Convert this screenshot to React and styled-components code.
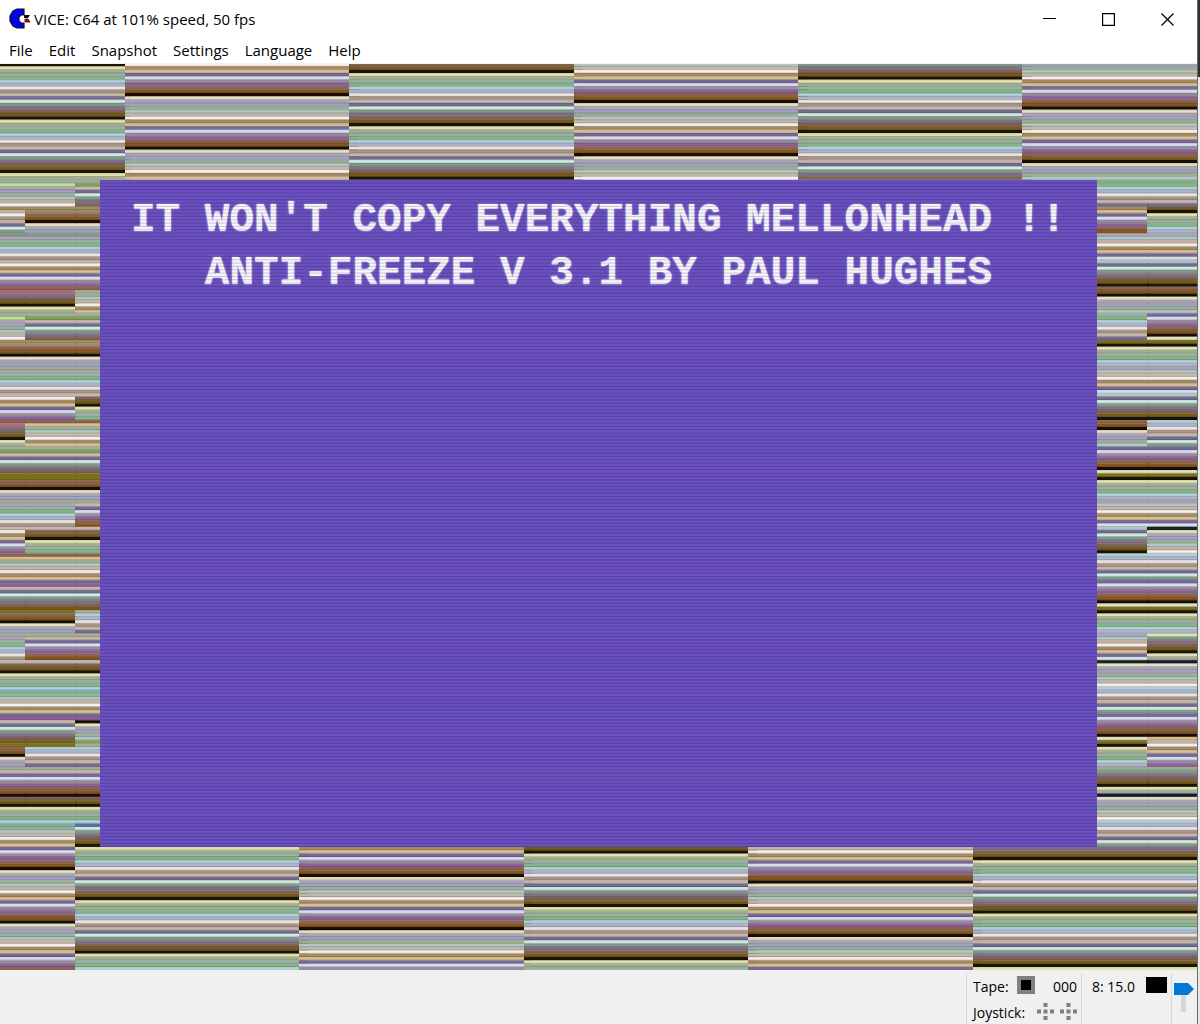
import React from 'react';
import styled, { createGlobalStyle } from 'styled-components';

const GlobalStyle = createGlobalStyle`
  * {
    box-sizing: border-box;
  }

  body {
    margin: 0;
    background: #f0f0f0;
    color: #000;
    font-family: 'Open Sans', 'Noto Sans', sans-serif;
    font-size: 15px;
  }
`;

// one letter per raster line colour
const COLORS = {
  K: '#1c1400',
  y: '#dfe2b0',
  g: '#a5ae90',
  t: '#96b4a0',
  G: '#86b585',
  b: '#b0cfdb',
  l: '#acb4c8',
  w: '#ece4e4',
  n: '#a69583',
  p: '#c8b6ab',
  v: '#736b92',
  m: '#cfe9e0',
  e: '#7f9a88',
  u: '#836f88',
  r: '#7e6355',
  o: '#775a16',
  k: '#1c0d00',
  Y: '#e0e0c4',
  a: '#aea4b8',
  c: '#a0a2c2',
  h: '#9fb092',
  i: '#adc8c6',
  q: '#c8b5a4',
  W: '#f4eeec',
  s: '#a48c62',
  S: '#d8bd90',
  V: '#77689c',
  M: '#d6dcec',
  z: '#9a8aa0',
  P: '#8d609a',
  R: '#8d6450',
  O: '#86561a',
  x: '#84a052',
  L: '#c4e090',
  B: '#4f74ac',
  T: '#78b3a5',
  N: '#17163c',
  E: '#16281c',
  D: '#7b7218',
  X: '#b46c7c',
};

const GREENS = 'KygtGblwnpvmeuro';
const VIOLETS = 'kYachiqWsSVMzPRO';

// repeats a palette so that its black line lands on the given row
const cycle = (palette, black, rows) =>
  Array.from({ length: rows }, (_, i) => palette[(i - black + 160) % 16]).join('');

const TOP = [
  { span: 40, lines: cycle(GREENS, 0, 35) },
  { span: 72, lines: cycle(VIOLETS, 9, 35) },
  { span: 72, lines: cycle(GREENS, 2, 35) },
  { span: 72, lines: cycle(VIOLETS, 11, 35) },
  { span: 72, lines: cycle(GREENS, 4, 35) },
  { span: 56, lines: cycle(VIOLETS, 13, 35) },
];

const BOTTOM = [
  { span: 24, lines: cycle(VIOLETS, 6, 37) },
  { span: 72, lines: cycle(GREENS, 15, 37) },
  { span: 72, lines: cycle(VIOLETS, 8, 37) },
  { span: 72, lines: cycle(GREENS, 1, 37) },
  { span: 72, lines: cycle(VIOLETS, 10, 37) },
  { span: 72, lines: cycle(GREENS, 3, 37) },
];

const LEFT = [
  {
    span: 8,
    lines: [
      'tLachiqWsqWnpvmeeatG',
      'blwnpWsSVMzPRXuroKyg',
      'tLachiqWssROkYachatG',
      'blwnpWsSVMzPRXuroKyg',
      'txpvmeurDDROkYachatG',
      'blwnpWsSVMzPRShiqWsS',
      'VPpvmeuroDROkYachatG',
      'blwnproKygtGbThiqWsS',
      'VPpvmeuroDROkYachpVM',
      'zPROkroKygtGbThiqWsS',
    ].join(''),
  },
  {
    span: 16,
    lines: [
      'tLachiqWssROkYaceatG',
      'blwnpWsSVMzPRXuroKyg',
      'txpvmeurssROkYachatG',
      'blwnpWsSVMzPRShiqWsS',
      'txpvmeurDDROkYachatG',
      'blwnproKygtGRShiqWsS',
      'VPpvmeuroDROkYachpVM',
      'zPROproKygtGbThiqWsS',
      'VPpvmeuroDblwnpvhpVM',
      'zPROkroKygtGbThiqWsS',
    ].join(''),
  },
  {
    span: 8,
    lines: [
      'txpvmeurssROkYaceatG',
      'blwnpWsSVMzPRghiqWsS',
      'txpvmeurssROkYachatG',
      'blwnproKygtGRShiqWsS',
      'txpvmeurDDROkYachpVM',
      'zPROproKygtGRShiqWsS',
      'VPpvmeurogblwnpvhpVM',
      'zPROproKygtGbThiqWsS',
      'VPkYachixgblwnpvhpVM',
      'zPROkroKygtGbBmeuroK',
    ].join(''),
  },
];

const RIGHT = [
  {
    span: 16,
    lines: [
      'GGblwnpvsSVMzPROaiqW',
      'sSVMivmeuroKROkYachi',
      'tGblwnpvDKygtGblaiqW',
      'sSVMivmeuroKROkYachi',
      'VMzPROkYDKygtGblaiqW',
      'sSVMivmeuroKblwnpvme',
      'VMzPROkYDKygtGblaiqW',
      'sSVMEYachiqWblwnpvme',
      'VMzPROkYDKygtGblheur',
      'oKygNYachiqWblwnpvme',
    ].join(''),
  },
  {
    span: 16,
    lines: [
      'GGblwnpvoKygtGblaiqW',
      'sSVMivmeuroKROkYachi',
      'VMzPROkYDKygtGblaiqW',
      'sSVMivmeuroKblwnpvme',
      'VMzPROkYDKygtGblaiqW',
      'sSVMEYachiqWblwnpvme',
      'VMzPROkYDKygtGblyeur',
      'oKygNYachiqWblwnpvme',
      'VMzPROkSqWsSVMzPheur',
      'oKygNYachiqWblwnpvme',
    ].join(''),
  },
];

const Desktop = styled.div`
  display: flex;
  min-height: 100vh;
`;

const Window = styled.main`
  flex: 1;
  min-width: 0;
  display: flex;
  flex-direction: column;
  border-right: 1px solid #6c6c6c;
`;

const Backdrop = styled.div`
  width: 2px;
  background: linear-gradient(#2f2f33 0 77px, #e8e8e8 77px);
`;

const Chrome = styled.header`
  position: relative;
  z-index: 1;
  height: 63px;
  background: #fff;
  box-shadow: 0 1px 0 #f0f0f0;
`;

const TitleBar = styled.div`
  display: flex;
  align-items: center;
  height: 38px;
  padding-left: 9px;
`;

const Title = styled.h1`
  flex: 1;
  margin: 0 0 0 3px;
  font-size: 15px;
  font-weight: 400;
  line-height: 20px;
`;

const CaptionButton = styled.button`
  display: flex;
  align-items: center;
  justify-content: center;
  width: 59px;
  height: 36px;
  padding: 0;
  border: 0;
  background: none;
`;

const MenuBar = styled.nav`
  display: flex;
  gap: 16px;
  padding-left: 9px;
`;

const MenuButton = styled.button`
  padding: 0;
  border: 0;
  background: none;
  color: inherit;
  font: inherit;
  line-height: 25px;
`;

const Display = styled.section`
  position: relative;
  flex: 1;
  display: flex;
  flex-direction: column;
  overflow: hidden;
`;

const Band = styled.div`
  flex: ${p => p.$rows} 1 0;
  min-height: 0;
  display: flex;
`;

const Strip = styled.svg`
  flex: ${p => p.$span} 1 0;
  min-width: 0;
  width: 0;
  height: 100%;
  display: block;
  overflow: visible;
`;

const Paper = styled.div`
  flex: 320 1 0;
  min-width: 0;
  padding-top: 14px;
  background: #6a50c0;
  color: #f6f4fc;
  text-align: center;
`;

const PaperLine = styled.p`
  margin: 0;
  font-family: 'Liberation Mono', monospace;
  font-size: 41px;
  font-weight: 700;
  line-height: 53px;
  white-space: pre;
  text-shadow: 0 0 2px #d8d0f4;
`;

const Scanlines = styled.svg`
  position: absolute;
  inset: 0;
  width: 100%;
  height: 100%;
  pointer-events: none;
`;

const StatusBar = styled.footer`
  display: flex;
  justify-content: flex-end;
  height: 54px;
  background: #f0f0f0;
  font-size: 14px;
  line-height: 26px;
`;

const Panel = styled.div`
  width: ${p => p.$width}px;
  margin-top: 4px;
  padding-left: ${p => p.$inset}px;
  border-left: 1px solid #d7d7d7;
`;

const PanelRow = styled.div`
  display: flex;
  align-items: center;
  height: 26px;
`;

const TapeMotor = styled.span`
  width: 18px;
  height: 18px;
  margin: 0 0 4px 8px;
  border: 4px solid #808080;
  background: #000;
`;

const Counter = styled.span`
  margin: 0 4px 0 auto;
`;

const DriveLed = styled.span`
  width: 21px;
  height: 16px;
  margin: 0 4px 4px auto;
  background: #000;
`;

const Ports = styled.span`
  display: flex;
  gap: 6px;
  margin: 0 4px 4px auto;
`;

const Volume = styled.input`
  appearance: none;
  display: block;
  width: 20px;
  height: 34px;
  margin: 9px 0 0;
  background: linear-gradient(#d6d6d6, #d6d6d6) 7px 5px / 5px 24px no-repeat;
  writing-mode: vertical-lr;
  direction: rtl;

  &::-webkit-slider-thumb {
    appearance: none;
    width: 20px;
    height: 12px;
    border: 0;
    background: #0078d7;
    clip-path: polygon(0 0, 14px 0, 100% 50%, 14px 100%, 0 100%);
  }
`;

const RasterStrip = ({ span, lines }) => (
  <Strip
    $span={span}
    viewBox={`0 0 1 ${lines.length}`}
    preserveAspectRatio="none"
    aria-hidden="true"
  >
    {lines.split('').map((c, i) => (
      <rect key={i} y={i} width="1.04" height="1" fill={COLORS[c]} />
    ))}
  </Strip>
);

const Border = ({ strips }) => strips.map((s, i) => <RasterStrip key={i} {...s} />);

const CommodoreLogo = () => (
  <svg width="22" height="22" viewBox="0 0 22 22" aria-hidden="true">
    <path
      d="M8 1h7v6h-3l-2 2v4l2 2h3v5H8l-4-2-3-5V8l3-5z"
      fill="#0000f4"
      stroke="#111"
      strokeWidth="1.2"
    />
    <path d="M15 7h6l-2 3h-4z" fill="#0a0a30" />
    <path d="M16 11h3l2 3h-5z" fill="#e00010" stroke="#200" strokeWidth="0.8" />
  </svg>
);

const JoystickIcon = () => (
  <svg width="17" height="17" viewBox="0 0 17 17" fill="#808080" aria-hidden="true">
    <path d="M6.5 0h4v4h-4zM0 6.5h4v4H0zM6.5 6.5h4v4h-4zM13 6.5h4v4h-4zM6.5 13h4v4h-4z" />
  </svg>
);

const MENUS = ['File', 'Edit', 'Snapshot', 'Settings', 'Language', 'Help'];

export default function App() {
  return (
    <Desktop>
      <GlobalStyle />
      <Window>
        <Chrome>
          <TitleBar>
            <CommodoreLogo />
            <Title>VICE: C64 at 101% speed, 50 fps</Title>
            <CaptionButton aria-label="Minimize">
              <svg width="13" height="13">
                <path d="M0 5.5h13" stroke="#000" />
              </svg>
            </CaptionButton>
            <CaptionButton aria-label="Maximize">
              <svg width="13" height="13">
                <path d="M.5 .5h12v12H.5z" fill="none" stroke="#000" strokeWidth="1.4" />
              </svg>
            </CaptionButton>
            <CaptionButton aria-label="Close">
              <svg width="13" height="13">
                <path d="M.5 .5l12 12M12.5 .5l-12 12" stroke="#000" strokeWidth="1.3" />
              </svg>
            </CaptionButton>
          </TitleBar>
          <MenuBar>
            {MENUS.map(m => (
              <MenuButton key={m}>{m}</MenuButton>
            ))}
          </MenuBar>
        </Chrome>
        <Display>
          <Band $rows={35}>
            <Border strips={TOP} />
          </Band>
          <Band $rows={200}>
            <Border strips={LEFT} />
            <Paper>
              <PaperLine>IT WON'T COPY EVERYTHING MELLONHEAD !!</PaperLine>
              <PaperLine>ANTI-FREEZE V 3.1 BY PAUL HUGHES</PaperLine>
            </Paper>
            <Border strips={RIGHT} />
          </Band>
          <Band $rows={37}>
            <Border strips={BOTTOM} />
          </Band>
          <Scanlines viewBox="0 0 1 272" preserveAspectRatio="none" aria-hidden="true">
            {Array.from({ length: 272 }, (_, i) => (
              <rect key={i} y={i - 0.15} width="1" height="0.3" fill="#000" opacity="0.18" />
            ))}
          </Scanlines>
        </Display>
        <StatusBar>
          <Panel $width={115} $inset={6}>
            <PanelRow>
              Tape:
              <TapeMotor />
              <Counter>000</Counter>
            </PanelRow>
            <PanelRow>
              Joystick:
              <Ports>
                <JoystickIcon />
                <JoystickIcon />
              </Ports>
            </PanelRow>
          </Panel>
          <Panel $width={90} $inset={10}>
            <PanelRow>
              8: 15.0
              <DriveLed />
            </PanelRow>
          </Panel>
          <Panel $width={26} $inset={2}>
            <Volume type="range" aria-label="Volume" min="0" max="100" defaultValue="100" />
          </Panel>
        </StatusBar>
      </Window>
      <Backdrop />
    </Desktop>
  );
}
